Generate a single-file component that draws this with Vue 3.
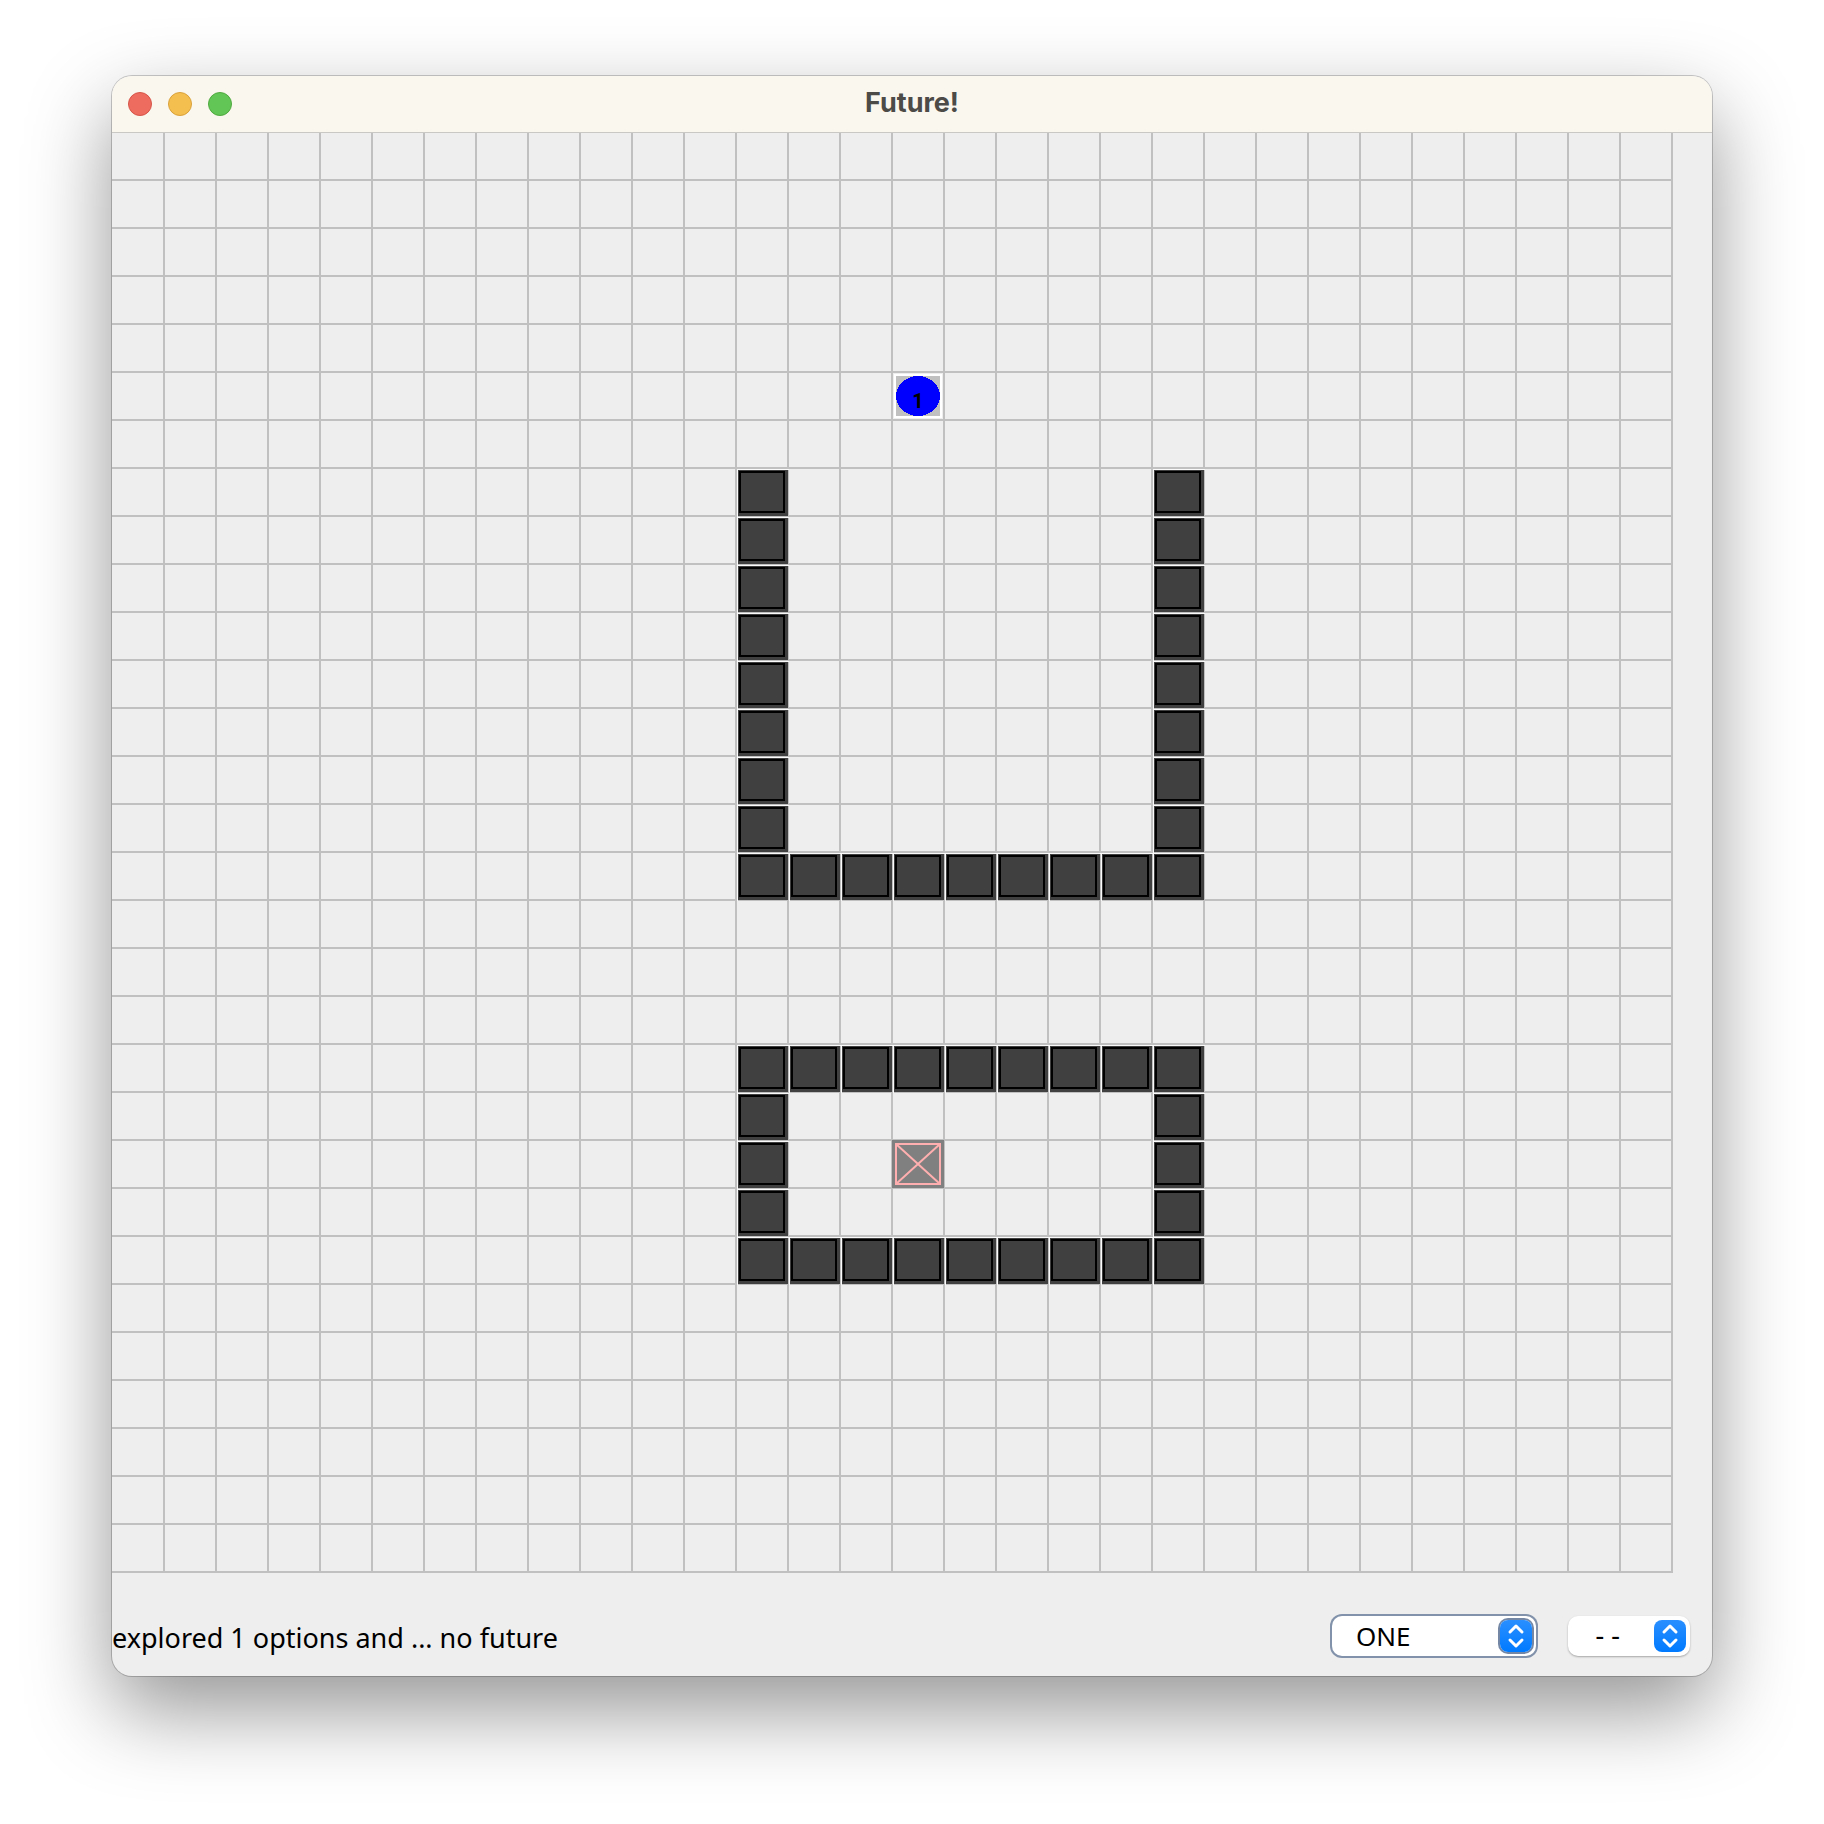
<script setup>
import { ref } from 'vue'

const COLS = 30
const ROWS = 30
const CELL_W = 52
const CELL_H = 48

const range = (from, to) => Array.from({ length: to - from + 1 }, (_, i) => from + i)

const walls = [
  ...range(7, 14).flatMap((row) => [[12, row], [20, row]]),
  ...range(12, 20).map((col) => [col, 15]),
  ...range(12, 20).map((col) => [col, 19]),
  ...range(20, 22).flatMap((row) => [[12, row], [20, row]]),
  ...range(12, 20).map((col) => [col, 23]),
]

const place = (col, row) => `translate(${col * CELL_W} ${row * CELL_H})`

const algorithm = ref('ONE')
const option = ref('--')
</script>

<template>
  <main class="desktop">
    <section class="window">
      <header class="titlebar">
        <div class="lights">
          <button class="light close" type="button" aria-label="Close"></button>
          <button class="light minimize" type="button" aria-label="Minimize"></button>
          <button class="light zoom" type="button" aria-label="Zoom"></button>
        </div>
        <h1 class="title">Future!</h1>
      </header>

      <svg class="board" width="1561" height="1440" viewBox="0 1 1561 1440" role="img" aria-label="Board">
        <g class="lines">
          <rect v-for="c in COLS" :key="'c' + c" :x="c * CELL_W - 1" y="0" width="2" :height="ROWS * CELL_H + 1" />
          <rect v-for="r in ROWS" :key="'r' + r" x="0" :y="r * CELL_H - 1" :width="COLS * CELL_W + 1" height="2" />
        </g>

        <g v-for="([col, row], i) in walls" :key="i" :transform="place(col, row)">
          <rect class="halo" x="1" y="1" width="52" height="48" />
          <rect class="edge" x="51" y="47" width="2" height="2" />
          <path class="edge" d="M2 48H52V49H2ZM52 2H53V48H52Z" />
          <rect class="wall" x="2" y="2" width="50" height="46" />
          <rect class="wall-outline" x="4" y="4" width="44" height="40" />
        </g>

        <g :transform="place(15, 5)">
          <rect class="agent-frame" x="2" y="2" width="48" height="44" />
          <rect class="agent-cell" x="4" y="4" width="44" height="40" />
          <ellipse class="agent" cx="26" cy="24" rx="22" ry="20" shape-rendering="crispEdges" />
          <text class="agent-label" x="26" y="36" text-anchor="middle">1</text>
        </g>

        <g :transform="place(15, 21)">
          <rect class="goal" width="52" height="48" />
          <path class="goal-mark" d="M4 4H48V44H4ZM4 4L48 44M48 4L4 44" />
        </g>
      </svg>

      <footer class="statusbar">
        <output class="status">explored 1 options and ... no future</output>
        <div class="picker picker-wide">
          <select v-model="algorithm" class="select" aria-label="Algorithm">
            <option>ONE</option>
          </select>
          <svg class="stepper" viewBox="0 0 32 32" aria-hidden="true">
            <path d="M10 12L16 6L22 12M10 20L16 26L22 20" />
          </svg>
        </div>
        <div class="picker picker-narrow">
          <select v-model="option" class="select" aria-label="Option">
            <option>--</option>
          </select>
          <svg class="stepper" viewBox="0 0 32 32" aria-hidden="true">
            <path d="M10 12L16 6L22 12M10 20L16 26L22 20" />
          </svg>
        </div>
      </footer>
    </section>
  </main>
</template>

<style>
body {
  margin: 0;
  background: #fff;
}
</style>

<style scoped>
.desktop {
  box-sizing: border-box;
  padding: 76px 112px 148px;
  overflow: hidden;
}

.window {
  overflow: hidden;
  border-radius: 20px;
  background: #eee;
  box-shadow:
    0 0 0 1px rgba(0, 0, 0, 0.2),
    0 34px 84px rgba(0, 0, 0, 0.42);
}

.titlebar {
  display: grid;
  grid-template-columns: 1fr auto 1fr;
  align-items: center;
  height: 56px;
  border-bottom: 1px solid #c9c8c4;
  background: #faf7ef;
}

.lights {
  display: flex;
  gap: 16px;
  padding-left: 16px;
}

.light {
  width: 24px;
  height: 24px;
  padding: 0;
  border: 1px solid;
  border-radius: 50%;
}

.close {
  border-color: #d65549;
  background: #ed6b5f;
}

.minimize {
  border-color: #d9a13b;
  background: #f5bf4f;
}

.zoom {
  border-color: #50a93f;
  background: #62c656;
}

.title {
  margin: 0;
  padding-bottom: 2px;
  color: #4c4b47;
  font: 700 27px/32px Inter, sans-serif;
}

.board {
  display: block;
}

.lines {
  fill: #c0c0c0;
}

.halo {
  fill: #fafafa;
}

.edge {
  fill: #c0c0c0;
}

.wall {
  fill: #404040;
}

.wall-outline {
  fill: none;
  stroke: #000;
  stroke-width: 2;
}

.agent-frame {
  fill: #fff;
}

.agent-cell {
  fill: #c0c0c0;
}

.agent {
  fill: #00f;
}

.agent-label {
  fill: #000;
  font: 700 20px/24px Roboto, sans-serif;
}

.goal {
  fill: #808080;
}

.goal-mark {
  fill: none;
  stroke: #ffafaf;
  stroke-width: 2;
}

.statusbar {
  display: flex;
  align-items: center;
  box-sizing: border-box;
  height: 103px;
  padding: 23px 22px 0 0;
  color: #000;
  font: 400 27px/32px "Noto Sans", sans-serif;
}

.status {
  flex: 1;
  padding-top: 4px;
}

.picker {
  position: relative;
  box-sizing: border-box;
  height: 40px;
  border-radius: 10px;
  background: #fff;
  box-shadow: 0 1px 2px rgba(0, 0, 0, 0.3);
  font-size: 26px;
}

.picker-wide {
  width: 204px;
  margin-right: 32px;
  box-shadow: 0 0 0 2px #8292aa;
}

.picker-narrow {
  width: 122px;
  font-family: "DejaVu Sans Mono", monospace;
}

.select {
  width: 100%;
  height: 40px;
  padding: 0 40px 0 24px;
  border: 0;
  outline: 0;
  background: transparent;
  color: #000;
  font: inherit;
  appearance: none;
}

.stepper {
  position: absolute;
  top: 4px;
  right: 4px;
  width: 32px;
  height: 32px;
  border-radius: 8px;
  background: linear-gradient(#2a8fff, #007aff);
  fill: none;
  stroke: #fff;
  stroke-width: 3;
  stroke-linecap: round;
  stroke-linejoin: round;
  pointer-events: none;
}

.picker-wide .stepper {
  box-shadow: 0 0 0 2px #7488a6;
}
</style>
